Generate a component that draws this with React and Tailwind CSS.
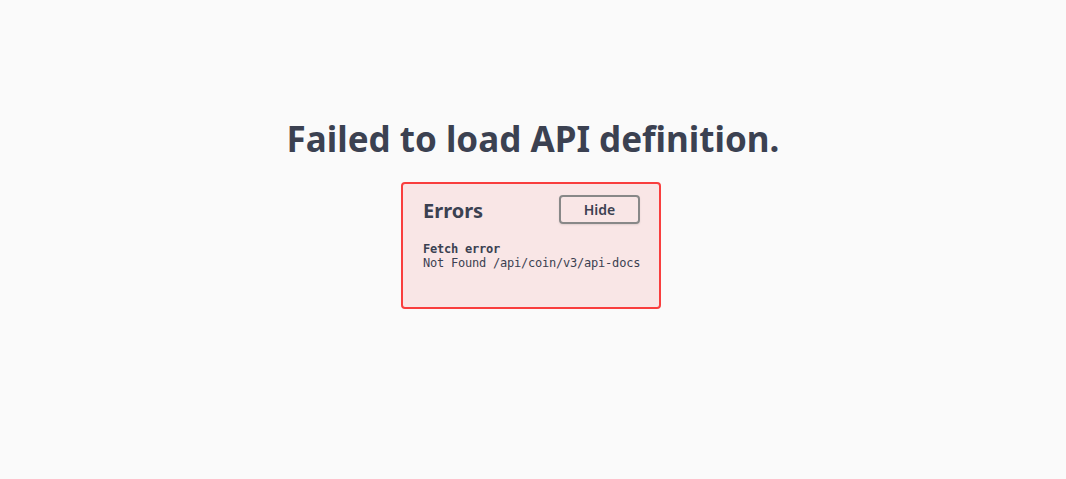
export default function App() {
  return (
    <div className="min-h-[479px] bg-[#fafafa] flex flex-col items-center pt-[114px] font-['Noto_Sans',sans-serif] text-[#3b4151]">
      <h4 className="text-[35px] leading-[50px] font-bold">
        Failed to load API definition.
      </h4>
      <div className="mt-[18px] ml-[-4px] w-[260px] h-[127px] border-2 border-[#f93e3e] rounded bg-[#f93e3e]/10 pl-5 pr-[19px] pt-[10px]">
        <div className="flex items-center justify-between">
          <h4 className="text-[20px] leading-[28px] font-bold pt-[3px]">Errors</h4>
          <button className="w-[81px] h-[29px] border-2 border-[#888] rounded text-[14px] font-semibold text-[#3b4151] shadow-[0_1px_2px_rgba(0,0,0,0.1)]">
            Hide
          </button>
        </div>
        <div className="mt-[17px] whitespace-nowrap font-['DejaVu_Sans_Mono',monospace] text-[12px] tracking-[-0.22px] leading-[14px] text-[#3b4151]">
          <div className="font-bold">Fetch error</div>
          <div>Not Found /api/coin/v3/api-docs</div>
        </div>
      </div>
    </div>
  );
}
